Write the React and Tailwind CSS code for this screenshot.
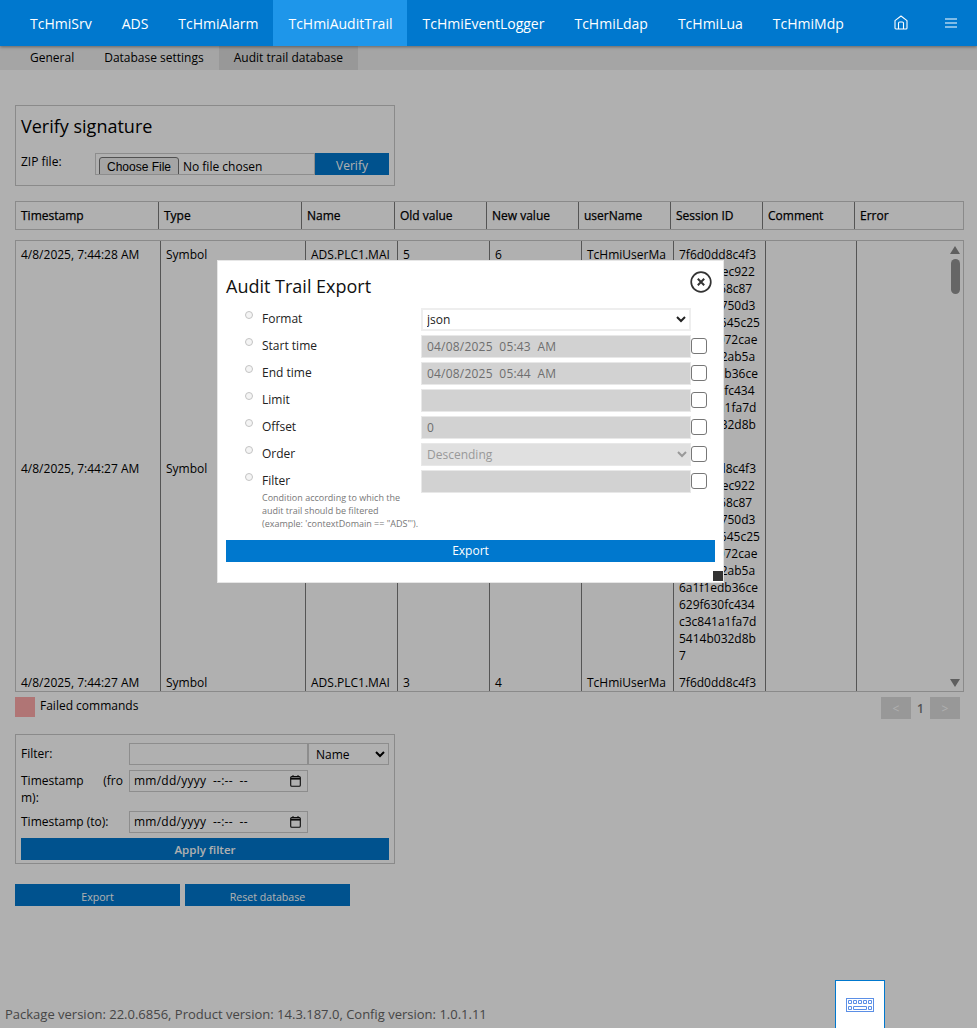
import React from "react";

const FONT = "font-['Open_Sans',sans-serif]";
const navItems = ["TcHmiSrv", "ADS", "TcHmiAlarm", "TcHmiAuditTrail", "TcHmiEventLogger", "TcHmiLdap", "TcHmiLua", "TcHmiMdp"];
const columns = ["Timestamp", "Type", "Name", "Old value", "New value", "userName", "Session ID", "Comment", "Error"];
const headCols = "grid grid-cols-[143px_143px_93px_92px_92px_92px_92px_92px_1fr]";
const bodyCols = "grid grid-cols-[145px_145px_92px_92px_92px_92px_92px_91px_1fr]";
const sessionLines = [
  "7f6d0dd8c4f3", "d1f4fa7ec922", "2fbf0f768c87", "bcff7e2750d3", "9e1a03645c25", "b94f1a072cae",
  "1d3f0fc2ab5a", "6a1f1edb36ce", "629f630fc434", "c3c841a1fa7d", "5414b032d8b", "7",
];

const rows = [
  ["4/8/2025, 7:44:28 AM", "Symbol", "ADS.PLC1.MAI", "5", "6", "TcHmiUserMa"],
  ["4/8/2025, 7:44:27 AM", "Symbol", "ADS.PLC1.MAI", "4", "5", "TcHmiUserMa"],
  ["4/8/2025, 7:44:27 AM", "Symbol", "ADS.PLC1.MAI", "3", "4", "TcHmiUserMa"],
];

const Cell = ({ children }) => (
  <div className="border-r border-[#7b7b7b] px-[5px] py-[5px] overflow-hidden whitespace-nowrap">
    {children}
  </div>
);

const DialogRow = ({ label, hint, children, check = true }) => (
  <div className="flex items-start mb-[4px]">
    <div className="w-[195px] pl-[19px] flex items-start">
      <span className="mt-[3px] w-2 h-2 rounded-full border border-[#c4c4c4] bg-[#f4f4f4] shrink-0" />
      <div className="ml-[9px] w-[150px]">
        <div className="text-[12px] leading-[21px] text-[#222]">{label}</div>
        {hint && <div className="text-[9px] leading-[13px] text-[#777] whitespace-nowrap">{hint}</div>}
      </div>
    </div>
    <div className="w-[270px] h-[23px] shrink-0">{children}</div>
    {check && <input type="checkbox" className="appearance-none mt-[3px] w-4 h-4 shrink-0 bg-white border border-[#777] rounded-[3px]" />}
  </div>
);

const disabledInput = "w-full h-full bg-[#d2d2d2] border border-[#e8e8e8] px-[5px] text-[12px] text-[#6e6e6e]";

const DateField = () => (
  <div className="w-[179px] h-[22px] border border-[#ccc] bg-white pl-[4px] pr-[6px] flex items-center justify-between">
    <input readOnly defaultValue="mm/dd/yyyy  --:--  --" className="w-[130px] text-[12px] tracking-[0.25px] text-black" />
    <svg width="11" height="12" viewBox="0 0 11 12" fill="none" stroke="#111">
      <rect x="0.7" y="1.5" width="9.6" height="9.8" rx="1" strokeWidth="1.1" />
      <path d="M0.7 3.6h9.6" strokeWidth="2" />
      <path d="M3 0v2M8 0v2" strokeWidth="1" />
    </svg>
  </div>
);

export default function App() {
  return (
    <div className={`${FONT} relative w-[977px] h-[1028px] overflow-hidden bg-white text-[12px] text-black flex flex-col`}>
      {/* Main navigation */}
      <nav className="relative z-20 h-[46px] shrink-0 bg-[#0078ce] text-white flex items-stretch pl-[15px] shadow-[0_1px_3px_rgba(0,0,0,0.4)]">
        {navItems.map((n) => (
          <div key={n} className={`px-[15px] flex items-center text-[14px] ${n === "TcHmiAuditTrail" ? "bg-[#1e96ea]" : ""}`}>{n}</div>
        ))}
        <div className="ml-auto flex items-center pr-[19px] gap-[36px]">
          <svg width="14" height="15" viewBox="0 0 14 15" fill="none" stroke="white" strokeWidth="1.1" className="-mt-[1px]">
            <path d="M1 13V5.6L7 1l6 4.6V13a1 1 0 0 1-1 1H2a1 1 0 0 1-1-1z" strokeLinejoin="round" />
            <path d="M4.5 14V8.2A1.2 1.2 0 0 1 5.7 7h2.6a1.2 1.2 0 0 1 1.2 1.2V14" />
          </svg>
          <svg width="14" height="10" viewBox="0 0 14 10" stroke="white" strokeWidth="1.2" className="-mt-[1px]">
            <path d="M1 1h12M1 5h12M1 9h12" />
          </svg>
        </div>
      </nav>

      {/* Sub tabs */}
      <div className="h-[24px] shrink-0 bg-[#f0f0f0] flex items-stretch pl-[15px] text-[12px]">
        {["General", "Database settings", "Audit trail database"].map((t, i) => (
          <div key={t} className={`px-[15px] flex items-center ${i === 2 ? "bg-[#dcdcdc]" : ""}`}>{t}</div>
        ))}
      </div>

      <main className="px-[15px] pt-[35px] flex flex-col flex-1">
        {/* Verify signature */}
        <section className="w-[380px] h-[81px] border border-[#c8c8c8] px-[5px]">
          <h2 className="text-[18px] leading-[24px] mt-[8px] font-normal">Verify signature</h2>
          <div className="flex mt-[15px] items-start">
            <div className="w-[74px] leading-[17px]">ZIP file:</div>
            <div className="w-[220px] h-[22px] border border-[#ccc] overflow-hidden pl-[3px]">
              <input
                type="file"
                className="block text-[12px] leading-[17px] w-[214px] mt-[3px] file:font-['Liberation_Sans',sans-serif] file:text-[12px] file:h-[20px] file:w-[80px] file:mr-[4px] file:border file:border-[#767676] file:rounded-[3px] file:bg-[#efefef] file:text-black"
              />
            </div>
            <button className="w-[74px] h-[22px] pt-[4px] leading-[18px] bg-[#0078ce] text-white text-[12px]">Verify</button>
          </div>
        </section>

        {/* Table header */}
        <div className={`${headCols} mt-[15px] w-[949px] h-[29px] border border-[#c8c8c8] font-medium [-webkit-text-stroke:0.25px_black] items-stretch`}>
          {columns.map((c, i) => (
            <div key={c} className={`px-[5px] flex items-center ${i < 8 ? "border-r border-[#7b7b7b]" : ""}`}>{c}</div>
          ))}
        </div>

        {/* Table body */}
        <div className="relative mt-[10px] w-[949px] h-[452px] border border-[#c8c8c8] overflow-hidden leading-[17px]">
          {rows.map((r, i) => (
            <div key={i} className={bodyCols}>
              {r.map((v, j) => <Cell key={j}>{v}</Cell>)}
              <Cell>
                {sessionLines.map((l, k) => <div key={k}>{l}</div>)}
              </Cell>
              <Cell />
              <div />
            </div>
          ))}
          <div className="absolute right-0 top-0 bottom-0 w-[16px] flex flex-col items-center">
            <svg width="10" height="8" viewBox="0 0 10 8" className="mt-[5px] fill-[#8a8a8a]"><path d="M5 0l5 8H0z" /></svg>
            <div className="w-[9px] h-[35px] rounded-[5px] bg-[#949494] mt-[5px]" />
            <svg width="10" height="8" viewBox="0 0 10 8" className="mt-auto mb-[4px] fill-[#8a8a8a]"><path d="M5 8L0 0h10z" /></svg>
          </div>
        </div>

        {/* Legend + pagination */}
        <div className="flex items-start w-[949px] mt-[5px] h-[22px]">
          <span className="w-5 h-5 bg-[#ffaaaa]" />
          <span className="ml-[5px] leading-[17px]">Failed commands</span>
          <div className="ml-auto mr-[4px] flex items-center">
            <button className="w-[30px] h-[22px] pt-[2px] bg-[#dcdcdc] text-white text-[12px]">&lt;</button>
            <span className="w-[19px] pt-[2px] text-center text-[#777] font-semibold">1</span>
            <button className="w-[30px] h-[22px] pt-[2px] bg-[#dcdcdc] text-white text-[12px]">&gt;</button>
          </div>
        </div>

        {/* Filter */}
        <section className="w-[380px] h-[130px] mt-[15px] border border-[#c8c8c8] p-[5px] pt-[8px]">
          <div className="flex items-center h-[22px]">
            <label className="w-[102px] mr-[6px]">Filter:</label>
            <input className="w-[179px] h-[22px] border border-[#ccc] bg-white" />
            <select defaultValue="Name" className="w-[81px] h-[22px] border border-[#ccc] bg-white pl-[3px] text-[12px]">
              <option>Name</option>
            </select>
          </div>
          <div className="flex items-start mt-[5px] h-[36px]">
            <label className="w-[102px] mr-[6px] leading-[17px] break-all text-justify pt-[2px]">Timestamp (from):</label>
            <DateField />
          </div>
          <div className="flex items-center mt-[5px] h-[22px]">
            <label className="w-[102px] mr-[6px]">Timestamp (to):</label>
            <DateField />
          </div>
          <button className="block w-[368px] h-[22px] pt-[2px] leading-[18px] mt-[5px] bg-[#0078ce] text-white font-semibold text-[11.5px]">Apply filter</button>
        </section>

        <div className="flex gap-[5px] mt-[20px]">
          <button className="w-[165px] h-[22px] pt-[4px] leading-[18px] bg-[#0078ce] text-white text-[10.6px]">Export</button>
          <button className="w-[165px] h-[22px] pt-[4px] leading-[18px] bg-[#0078ce] text-white text-[10.6px]">Reset database</button>
        </div>

        <footer className="mt-auto -ml-[10px] mb-[5px] text-[13px] text-[#666] leading-[17px]">
          Package version: 22.0.6856, Product version: 14.3.187.0, Config version: 1.0.1.11
        </footer>
      </main>

      {/* Modal overlay */}
      <div className="absolute left-0 right-0 top-[46px] bottom-0 bg-[rgba(0,0,0,0.31)] z-10">
        <div className="absolute left-[217px] top-[214px] w-[507px] h-[323px] bg-white border border-[#e6e6e6] px-[8px]">
          <div className="flex items-center justify-between h-[47px]">
            <h3 className="text-[18px] leading-[24px] font-normal text-[#111] mt-[2px]">Audit Trail Export</h3>
            <svg width="22" height="22" viewBox="0 0 22 22" fill="none" stroke="#333" className="mr-[3px] -mt-[6px]">
              <circle cx="11" cy="11" r="9.8" strokeWidth="1.7" />
              <path d="M7.8 7.8l6.4 6.4M14.2 7.8l-6.4 6.4" strokeWidth="2" />
            </svg>
          </div>
          <DialogRow label="Format" check={false}>
            <select defaultValue="json" className="w-full h-full bg-white border-2 border-[#eeeeee] text-[12px] text-[#222]">
              <option>json</option>
            </select>
          </DialogRow>
          <DialogRow label="Start time">
            <input readOnly disabled defaultValue="04/08/2025  05:43  AM" className={`${disabledInput} tracking-[0.2px]`} />
          </DialogRow>
          <DialogRow label="End time">
            <input readOnly disabled defaultValue="04/08/2025  05:44  AM" className={`${disabledInput} tracking-[0.2px]`} />
          </DialogRow>
          <DialogRow label="Limit">
            <input disabled className={disabledInput} />
          </DialogRow>
          <DialogRow label="Offset">
            <input disabled defaultValue="0" className={disabledInput} />
          </DialogRow>
          <DialogRow label="Order">
            <select disabled defaultValue="Descending" className="w-full h-full bg-[#e0e0e0] border border-[#e8e8e8] pl-[1px] text-[12px] text-[#999]">
              <option>Descending</option>
            </select>
          </DialogRow>
          <DialogRow
            label="Filter"
            hint={<>Condition according to which the<br />audit trail should be filtered<br />(example: 'contextDomain == "ADS"').</>}
          >
            <input disabled className={disabledInput} />
          </DialogRow>
          <button className="block w-[489px] h-[22px] mt-[10px] bg-[#0078ce] text-white text-[12px]">Export</button>
          <span className="absolute right-0 bottom-[1px] w-[10px] h-[10px] bg-[#333]" />
        </div>

        {/* Virtual keyboard toggle */}
        <div className="absolute left-[835px] bottom-0 w-[50px] h-[48px] bg-white border border-[#0078ce] border-b-0 flex items-center justify-center">
          <svg width="28" height="14" viewBox="0 0 28 14" fill="none" stroke="#5b8fe6" strokeWidth="1">
            <rect x="0.5" y="0.5" width="27" height="13" />
            <path d="M2.5 2.5h3v3h-3zM7.5 2.5h3v3h-3zM12.5 2.5h3v3h-3zM17.5 2.5h3v3h-3zM22.5 2.5h3v3h-3zM2.5 8.5h3v3h-3zM7.5 8.5h13v3h-13zM22.5 8.5h3v3h-3z" />
          </svg>
        </div>
      </div>
    </div>
  );
}
